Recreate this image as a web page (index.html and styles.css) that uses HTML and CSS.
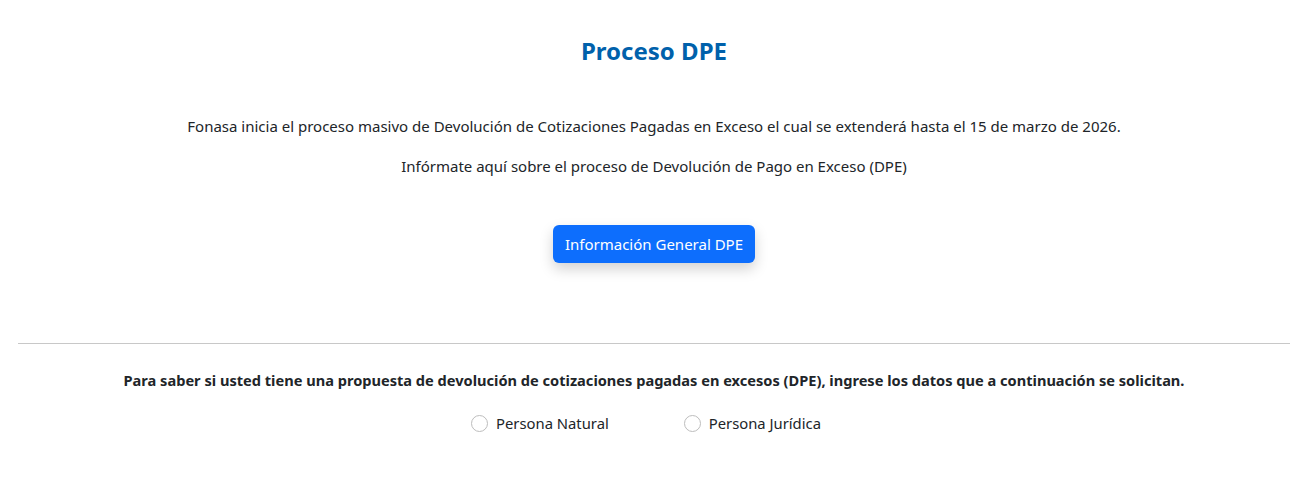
FILE: index.html
```html
<!DOCTYPE html>
<html lang="es">
<head>
<meta charset="utf-8">
<title>Proceso DPE</title>
<link rel="stylesheet" href="styles.css">
</head>
<body>
<main class="page">
  <section class="intro">
    <h1 class="title">Proceso DPE</h1>
    <p class="lead">Fonasa inicia el proceso masivo de Devolución de Cotizaciones Pagadas en Exceso el cual se extenderá hasta el 15 de marzo de 2026.</p>
    <p class="lead">Infórmate aquí sobre el proceso de Devolución de Pago en Exceso (DPE)</p>
    <div class="actions">
      <button class="btn-primary" type="button">Información General DPE</button>
    </div>
  </section>
  <hr class="divider">
  <section class="query">
    <p class="query-text">Para saber si usted tiene una propuesta de devolución de cotizaciones pagadas en excesos (DPE), ingrese los datos que a continuación se solicitan.</p>
    <div class="radios">
      <label class="radio"><span class="radio-circle"></span>Persona Natural</label>
      <label class="radio"><span class="radio-circle"></span>Persona Jurídica</label>
    </div>
  </section>
</main>
</body>
</html>
```
FILE: styles.css
```css
html, body {
  margin: 0;
  padding: 0;
  background: #ffffff;
}
body {
  font-family: "Noto Sans", "Open Sans", sans-serif;
  color: #212529;
  font-size: 15px;
}
.page {
  padding: 0 18px;
}
.intro {
  display: flex;
  flex-direction: column;
  align-items: center;
  padding-top: 33px;
}
.title {
  margin: 0 0 46px;
  font-size: 24px;
  font-weight: 700;
  line-height: 36px;
  color: #0061ab;
}
.lead {
  margin: 0 0 17px;
  line-height: 23px;
  text-align: center;
}
.actions {
  margin-top: 30px;
  margin-bottom: 80px;
}
.btn-primary {
  font-family: inherit;
  font-size: 15px;
  color: #ffffff;
  background: #0d6efd;
  border: none;
  border-radius: 6px;
  height: 38px;
  padding: 0 12px;
  box-shadow: 0 6px 14px rgba(0, 0, 0, 0.18);
}
.divider {
  margin: 0;
  border: 0;
  border-top: 1px solid #c8c8c8;
}
.query {
  display: flex;
  flex-direction: column;
  align-items: center;
  padding-top: 25px;
}
.query-text {
  margin: 0;
  font-weight: 700;
  font-size: 14.6px;
  line-height: 23px;
  text-align: center;
}
.radios {
  display: flex;
  gap: 75px;
  margin-top: 20px;
  padding-right: 16px;
}
.radio {
  display: flex;
  align-items: center;
  gap: 8px;
  font-size: 14.8px;
  line-height: 22px;
}
.radio-circle {
  width: 15px;
  height: 15px;
  border: 1px solid #bdbdbd;
  border-radius: 50%;
  background: #fff;
}
```
